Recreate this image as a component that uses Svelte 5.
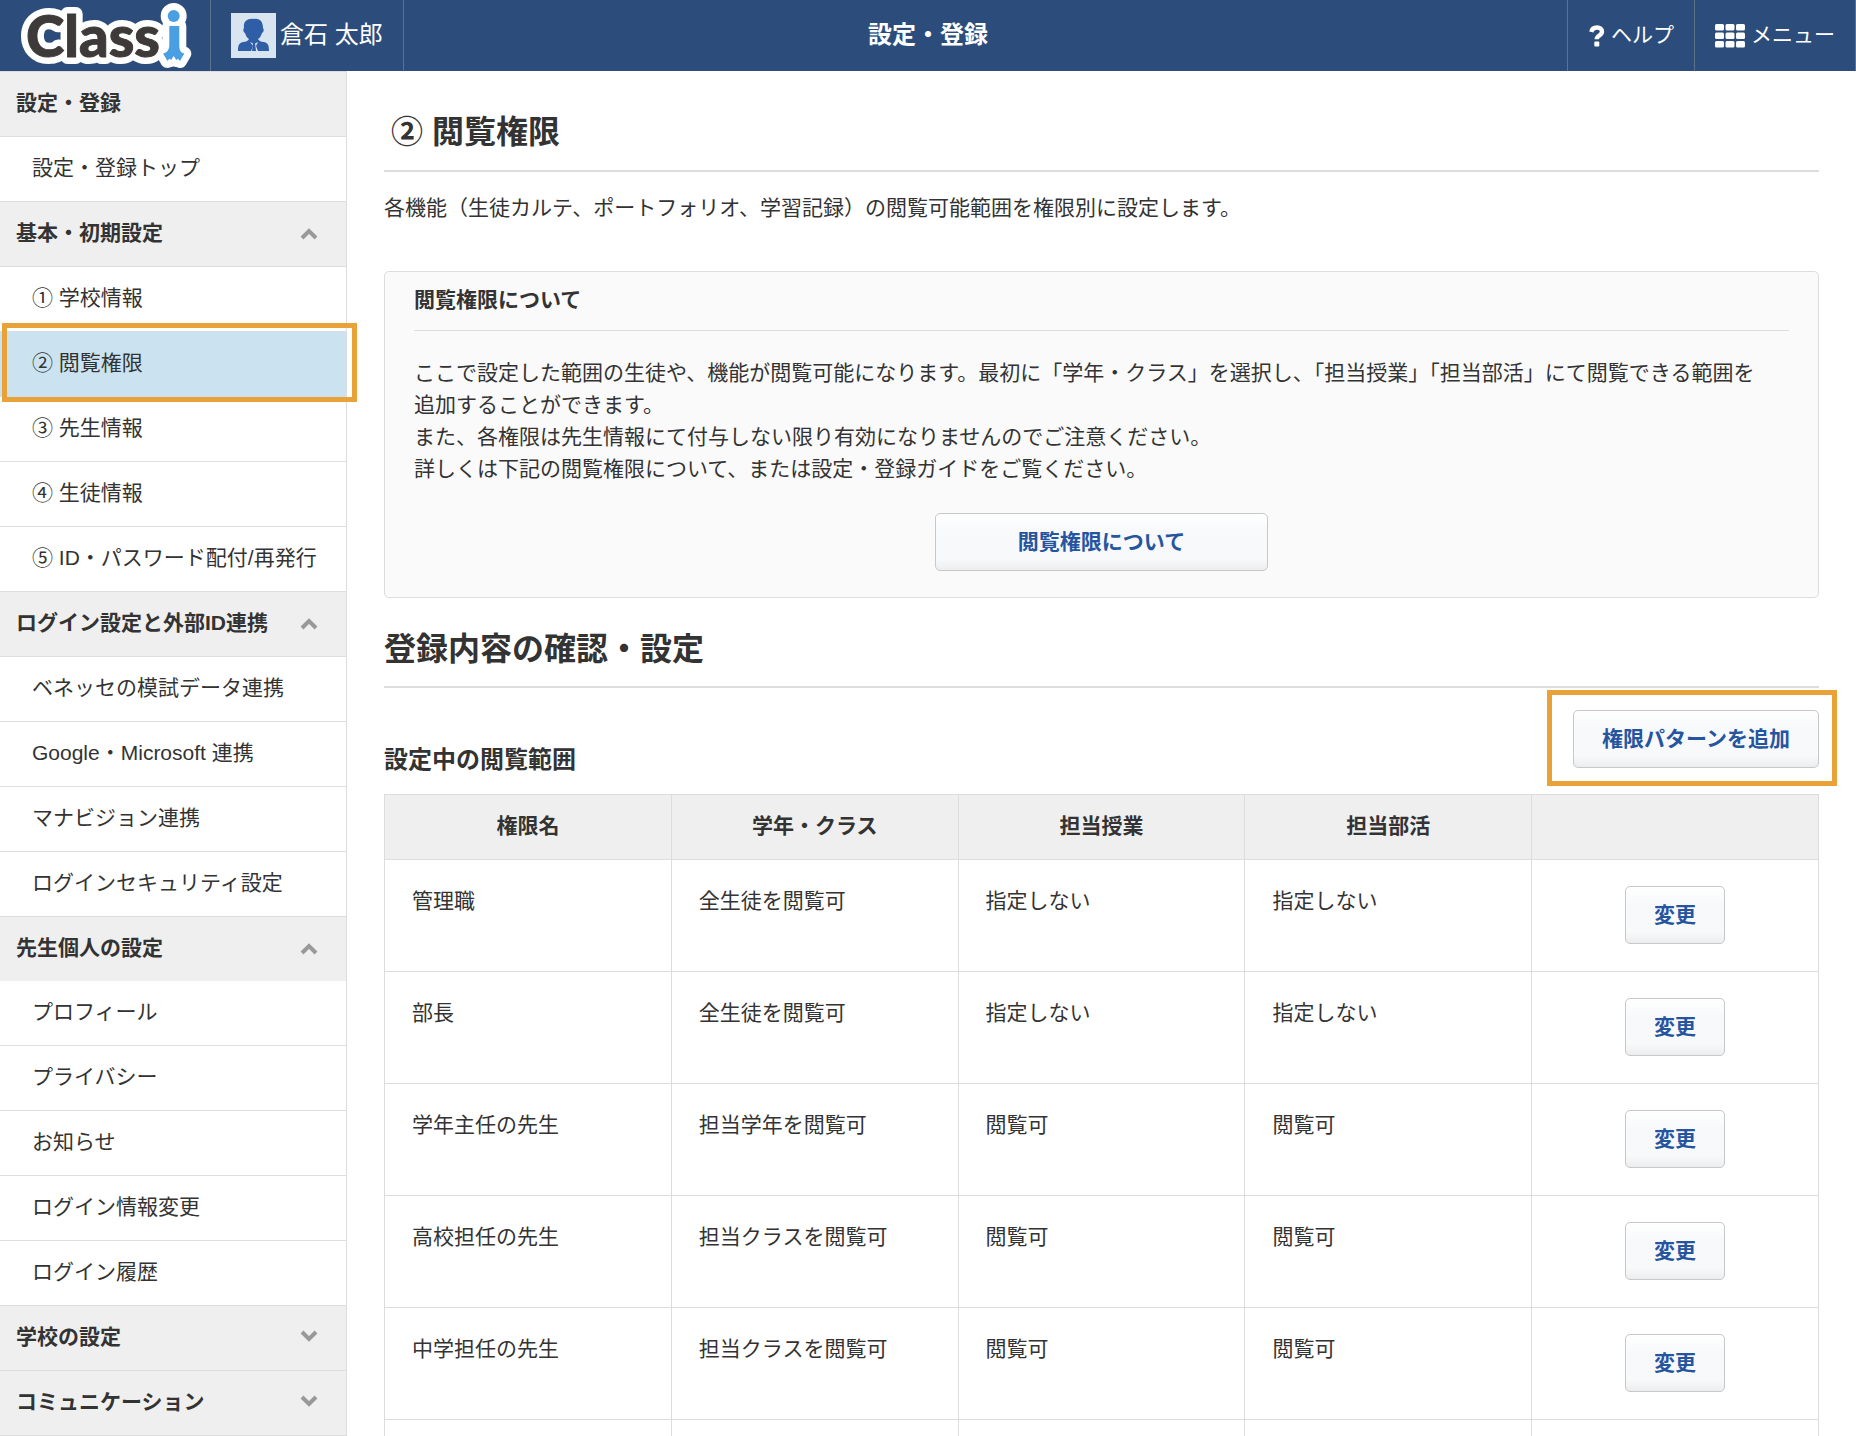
<script>
  const groups = [
    { title: '設定・登録', chevron: null, items: ['設定・登録トップ'] },
    {
      title: '基本・初期設定',
      chevron: 'up',
      items: ['① 学校情報', '② 閲覧権限', '③ 先生情報', '④ 生徒情報', '⑤ ID・パスワード配付/再発行'],
    },
    {
      title: 'ログイン設定と外部ID連携',
      chevron: 'up',
      items: ['ベネッセの模試データ連携', 'Google・Microsoft 連携', 'マナビジョン連携', 'ログインセキュリティ設定'],
    },
    {
      title: '先生個人の設定',
      chevron: 'up',
      flush: true,
      items: ['プロフィール', 'プライバシー', 'お知らせ', 'ログイン情報変更', 'ログイン履歴'],
    },
    { title: '学校の設定', chevron: 'down', items: [] },
    { title: 'コミュニケーション', chevron: 'down', items: [] },
  ];
  const active = '② 閲覧権限';

  const columns = ['権限名', '学年・クラス', '担当授業', '担当部活', ''];
  const rows = [
    ['管理職', '全生徒を閲覧可', '指定しない', '指定しない'],
    ['部長', '全生徒を閲覧可', '指定しない', '指定しない'],
    ['学年主任の先生', '担当学年を閲覧可', '閲覧可', '閲覧可'],
    ['高校担任の先生', '担当クラスを閲覧可', '閲覧可', '閲覧可'],
    ['中学担任の先生', '担当クラスを閲覧可', '閲覧可', '閲覧可'],
  ];
  const dots = [0, 1, 2];
  const figure = 'M149.300 25h10v19c0 5 1 7.500 5 8.500l-4.300 7.500c-1-1-1.500-2-2-2.300l-1.700 1.300-2.600-4-2.600 4-1.700-1.300c-.5.3-1 1.300-2 2.300l-4.300-7.500c4-1 6.200-3.500 6.200-8.500z';
</script>

<div class="app">
  <header>
    <div class="left">
      <a class="logo" href="#top" aria-label="Classi">
        <svg width="172" height="70" viewBox="0 0 172 70">
          <g class="halo">
            <text x="6" y="56">Class</text>
            <circle cx="153.700" cy="15" r="6" />
            <path d={figure} />
          </g>
          <text class="word" x="6" y="56">Class</text>
          <g class="figure">
            <circle cx="153.700" cy="15" r="6" />
            <path d={figure} />
          </g>
        </svg>
      </a>
      <a class="user" href="#profile">
        <svg width="45" height="45" viewBox="0 0 45 45">
          <rect width="45" height="45" fill="#d9e4f1" />
          <path
            d="M23 6c6-1 9 3 9 9 1 1 1 4-1 5-1 3-2 5-4 6 1 2 3 3 6 3 4 1 5 3 5 9H7c0-6 1-8 5-9 3 0 5-1 6-3-2-1-3-3-4-6-2-1-2-4-1-5-1-6 3-10 10-9z"
            fill="#2f5ea6"
          />
          <path d="M19 29l4 2 4-2-2 4 2 5h-7l2-5z" fill="#d9e4f1" />
          <path d="M22 30h2l1 8h-4z" fill="#2f5ea6" />
        </svg>
        <span>倉石 太郎</span>
      </a>
    </div>
    <div class="title">設定・登録</div>
    <div class="right">
      <a class="help" href="#help">
        <svg width="16" height="22" viewBox="0 0 16 22">
          <path d="M2.300 7C3.500 1 13 1 13 6.800c0 3.700-5.300 3.700-5.300 7.500" fill="none" stroke="#fff" stroke-width="4.400" />
          <rect x="5.300" y="16.500" width="5" height="5" rx="1" fill="#fff" />
        </svg>
        <span>ヘルプ</span>
      </a>
      <a class="menu" href="#menu">
        <svg width="30" height="24" viewBox="0 0 30 24">
          {#each dots as r}
            {#each dots as c}
              <rect x={c * 10.5} y={r * 8.5} width="9" height="6.500" rx="1.500" fill="#fff" />
            {/each}
          {/each}
        </svg>
        <span>メニュー</span>
      </a>
    </div>
  </header>

  <div class="body">
    <nav>
      {#each groups as g}
        <button type="button" class="group">
          <span>{g.title}</span>
          {#if g.chevron}
            <svg class={g.chevron} width="18" height="14" viewBox="0 0 18 14">
              <path d="M2 12l7-7 7 7" fill="none" stroke="#999" stroke-width="4" />
            </svg>
          {/if}
        </button>
        {#if g.items.length}
          <ul class:flush={g.flush}>
            {#each g.items as item}
              <li>
                <a href="#item" class:active={item === active}>{item}</a>
                {#if item === active}<span class="mark"></span>{/if}
              </li>
            {/each}
          </ul>
        {/if}
      {/each}
    </nav>

    <main>
      <h1>② 閲覧権限</h1>
      <p class="lead">各機能（生徒カルテ、ポートフォリオ、学習記録）の閲覧可能範囲を権限別に設定します。</p>

      <section class="about">
        <h4>閲覧権限について</h4>
        <p>
          ここで設定した範囲の生徒や、機能が閲覧可能になります。最初に「学年・クラス」を選択し、「担当授業」「担当部活」にて閲覧できる範囲を追加することができます。<br
          />また、各権限は先生情報にて付与しない限り有効になりませんのでご注意ください。<br
          />詳しくは下記の閲覧権限について、または設定・登録ガイドをご覧ください。
        </p>
        <button type="button" class="btn wide">閲覧権限について</button>
      </section>

      <h2>登録内容の確認・設定</h2>
      <div class="bar">
        <h3>設定中の閲覧範囲</h3>
        <div class="add">
          <button type="button" class="btn">権限パターンを追加</button>
          <span class="mark"></span>
        </div>
      </div>

      <table>
        <thead>
          <tr>
            {#each columns as c}<th>{c}</th>{/each}
          </tr>
        </thead>
        <tbody>
          {#each rows as row}
            <tr>
              {#each row as cell}<td>{cell}</td>{/each}
              <td class="action"><button type="button" class="btn">変更</button></td>
            </tr>
          {/each}
          <tr>
            {#each columns as _}<td></td>{/each}
          </tr>
        </tbody>
      </table>
    </main>
  </div>
</div>

<style>
  :global(body) {
    background: #fff;
  }
  .app {
    height: 100vh;
    overflow: hidden;
    display: flex;
    flex-direction: column;
    font-family: 'Liberation Sans', 'Noto Sans CJK JP', sans-serif;
    font-size: 21px;
    line-height: 32px;
    color: #333;
  }
  a {
    color: inherit;
    text-decoration: none;
  }
  button {
    font: inherit;
    color: inherit;
    cursor: pointer;
  }
  h1,
  h2,
  h3,
  h4,
  p,
  ul {
    margin: 0;
    padding: 0;
  }

  header {
    flex: none;
    display: grid;
    grid-template-columns: 1fr auto 1fr;
    height: 71px;
    background: #2c4d7b;
    color: #fff;
  }
  .left,
  .right {
    display: flex;
  }
  .right {
    justify-content: flex-end;
  }
  header a {
    display: flex;
    align-items: center;
    border-right: 1px solid #5b7289;
    box-sizing: border-box;
    padding-bottom: 3px;
  }
  header a span {
    padding-bottom: 2px;
  }
  .logo {
    padding: 0 18px 0 20px;
  }
  .logo text {
    font-family: Lato, sans-serif;
    font-weight: 900;
    font-size: 58px;
  }
  .halo {
    fill: #fff;
    stroke: #fff;
    stroke-width: 14;
    stroke-linejoin: round;
  }
  .word {
    fill: #3e3a39;
    stroke: #3e3a39;
    stroke-width: 1;
  }
  .figure {
    fill: #4a9fe3;
  }
  .user {
    gap: 4px;
    padding: 0 20px;
    font-size: 24px;
  }
  .title {
    align-self: center;
    font-size: 24px;
    font-weight: bold;
    padding-bottom: 2px;
  }
  .help {
    gap: 6px;
    padding: 0 20px 0 21px;
    border-left: 1px solid #5b7289;
  }
  .menu {
    gap: 6px;
    padding: 0 20px;
  }

  .body {
    flex: 1;
    display: flex;
    min-height: 0;
  }
  nav {
    flex: none;
    width: 346px;
    border-right: 1px solid #ddd;
    align-self: flex-start;
    border-bottom: 1px solid #ddd;
  }
  .group {
    display: flex;
    align-items: center;
    justify-content: space-between;
    width: 100%;
    height: 65px;
    padding: 0 28px 2px 16px;
    border: 0;
    border-top: 1px solid #ddd;
    background: #efefef;
    font-weight: bold;
    text-align: left;
    box-sizing: border-box;
  }
  .down {
    transform: rotate(180deg);
  }
  ul {
    list-style: none;
  }
  li {
    position: relative;
  }
  li a {
    display: block;
    border-top: 1px solid #ddd;
    padding: 15px 0 17px 32px;
    white-space: nowrap;
  }
  .flush li:first-child a {
    border-top: 0;
  }
  li a.active {
    background: #cbe3f0;
  }
  li:has(.active) + li a {
    border-top-color: #cbe3f0;
  }
  .mark {
    position: absolute;
    border: 5px solid #e8a238;
    pointer-events: none;
    z-index: 1;
  }
  li .mark {
    inset: -8px -11px -6px 2px;
  }

  main {
    flex: 1;
    min-width: 0;
    padding: 0 37px;
  }
  h1,
  h2 {
    font-size: 32px;
    line-height: 48px;
    border-bottom: 2px solid #ddd;
  }
  h1 {
    padding: 37px 0 14px 7px;
  }
  .lead {
    padding: 20px 0 47px;
  }
  .about {
    padding: 12px 29px 26px;
    border: 1px solid #ddd;
    border-radius: 5px;
    background: #fafafa;
  }
  h4 {
    font-size: 21px;
    padding-bottom: 14px;
    border-bottom: 1px solid #ddd;
  }
  .about p {
    padding: 26px 16px 28px 0;
  }
  .btn {
    display: block;
    height: 58px;
    padding: 0 28px;
    border: 1px solid #c8c8c8;
    border-radius: 5px;
    background: linear-gradient(#fff, #f7f9fb 30%, #f7f9fb 80%, #ebedef);
    color: #2655a0;
    font-weight: bold;
    box-sizing: border-box;
  }
  .wide {
    width: 333px;
    margin: 0 auto;
  }
  h2 {
    padding: 27px 0 13px;
  }
  .bar {
    display: flex;
    justify-content: space-between;
    align-items: flex-end;
    padding: 22px 0 26px;
  }
  h3 {
    font-size: 24px;
    line-height: 32px;
    margin-bottom: -8px;
  }
  .add {
    position: relative;
  }
  .add .mark {
    inset: -20px -18px -18px -26px;
  }

  table {
    width: 100%;
    border-collapse: collapse;
    table-layout: fixed;
  }
  th,
  td {
    border: 1px solid #ddd;
    box-sizing: border-box;
  }
  th {
    height: 65px;
    padding: 0 0 2px;
    background: #efefef;
  }
  td {
    height: 112px;
    padding: 25px 27px 0;
    vertical-align: top;
  }
  .action .btn {
    margin: 1px auto 0;
  }
</style>
